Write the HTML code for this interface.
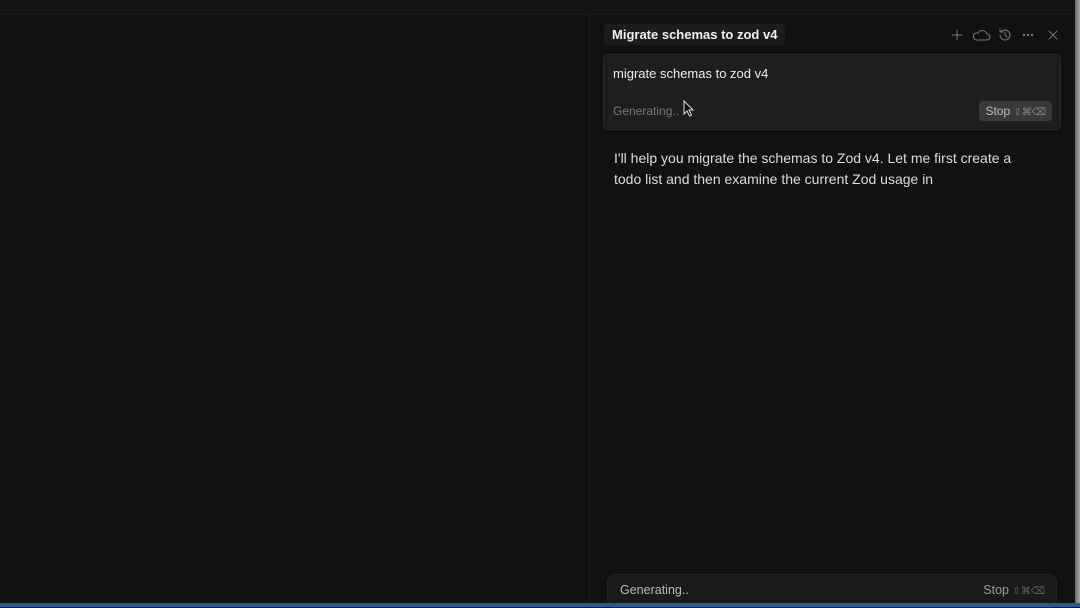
<!DOCTYPE html>
<html><head><meta charset="utf-8"><style>
*{margin:0;padding:0;box-sizing:border-box}
body{width:1080px;height:607px;background:#111112;overflow:hidden;position:relative;font-family:"Liberation Sans",sans-serif;color:#e6e6e6}
.top{position:absolute;left:0;top:0;width:1075px;height:15px;background:#141415;border-bottom:1px solid #1d1d1f}
.div{position:absolute;left:589px;top:15px;width:1px;height:588px;background:#1b1b1d}
.rstrip{position:absolute;left:1075px;top:0;width:5px;height:607px;background:linear-gradient(90deg,#6a6a6a,#a8a8a8)}
.blue{position:absolute;left:0;top:603px;width:1080px;height:4px;background:#2a5a92}
.title{position:absolute;left:604px;top:24px;height:21px;padding:0 8px;background:#1c1c1e;border-radius:4px;font-size:13px;font-weight:bold;line-height:21px;color:#f0f0f0}
.icons{position:absolute;top:26px;left:948px}
.box{position:absolute;left:603px;top:54px;width:458px;height:76px;background:#1e1e20;border:1px solid #2a2a2c;border-radius:6px}
.box .q{position:absolute;left:9px;top:11px;font-size:13px;color:#ececec}
.box .g{position:absolute;left:9px;top:49px;font-size:12px;color:#7a7a7a}
.stop{position:absolute;right:8px;top:46px;height:20px;padding:0 6px;background:#3a3a3c;border-radius:4px;font-size:12px;line-height:20px;color:#bdbdbd}
.stop span{font-size:10px;color:#888}
.msg{position:absolute;left:614px;top:148px;width:425px;font-size:14px;line-height:21px;color:#dcdcdc}
.bot{position:absolute;left:607px;top:574px;width:450px;height:34px;background:#1a1a1b;border:1px solid #222;border-radius:8px}
.bot .g{position:absolute;left:12px;top:8px;font-size:12.5px;color:#bbb}
.bot .s{position:absolute;right:11px;top:8px;font-size:12.5px;color:#9a9a9a}
.bot .s span{font-size:10px;color:#666}
</style></head><body>
<div class="top"></div>
<div class="div"></div>
<div class="title">Migrate schemas to zod v4</div>
<svg class="icons" width="115" height="18" viewBox="0 0 115 18" fill="none" stroke="#777" stroke-width="1" stroke-linecap="round">
<path d="M9 4v10M4 9h10"/>
<path d="M28 14h11a3 3 0 0 0 0-6 5 5 0 0 0-9-1 3.5 3.5 0 0 0-2 7z"/>
<path d="M52 9a5 5 0 1 0 5-5 5 5 0 0 0-4 2M52 3v3h3M57 6v3l2 2"/>
<circle cx="76" cy="9" r=".7" fill="#777"/><circle cx="80" cy="9" r=".7" fill="#777"/><circle cx="84" cy="9" r=".7" fill="#777"/>
<path d="M101 5l8 8M109 5l-8 8"/>
</svg>
<div class="box">
<div class="q">migrate schemas to zod v4</div>
<div class="g">Generating..</div>
<div class="stop">Stop <span>⇧⌘⌫</span></div>
</div>
<svg style="position:absolute;left:683px;top:100px" width="12" height="17" viewBox="0 0 12 17"><path d="M1 1v13l3-3 2.5 5 2-1-2.5-5h4z" fill="#111" stroke="#ddd" stroke-width="1"/></svg>
<div class="msg">I'll help you migrate the schemas to Zod v4. Let me first create a todo list and then examine the current Zod usage in</div>
<div class="bot"><div class="g">Generating..</div><div class="s">Stop <span>⇧⌘⌫</span></div></div>
<div class="rstrip"></div>
<div class="blue"></div>
</body></html>
